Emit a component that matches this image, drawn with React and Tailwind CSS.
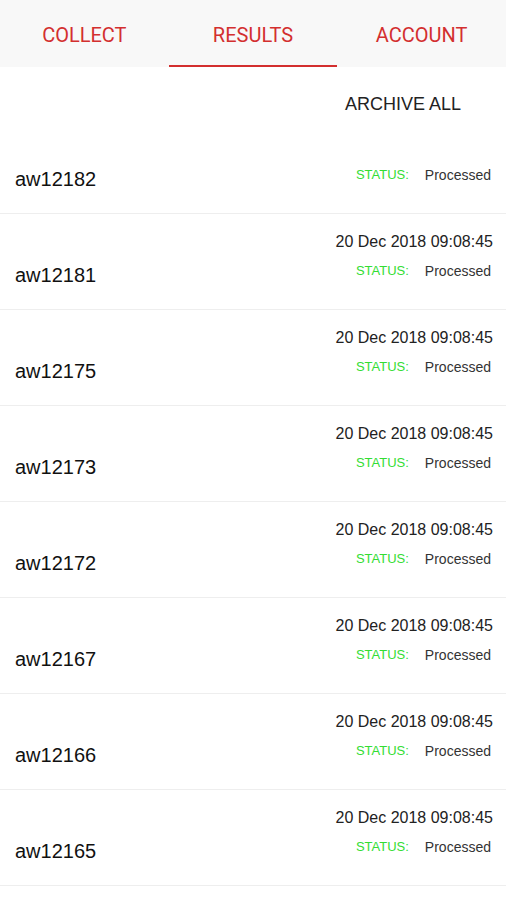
import React from "react";

const rows = [
  { id: "aw12182", date: "" },
  { id: "aw12181", date: "20 Dec 2018 09:08:45" },
  { id: "aw12175", date: "20 Dec 2018 09:08:45" },
  { id: "aw12173", date: "20 Dec 2018 09:08:45" },
  { id: "aw12172", date: "20 Dec 2018 09:08:45" },
  { id: "aw12167", date: "20 Dec 2018 09:08:45" },
  { id: "aw12166", date: "20 Dec 2018 09:08:45" },
  { id: "aw12165", date: "20 Dec 2018 09:08:45" },
];

const arial = { fontFamily: "'Liberation Sans', Arial, sans-serif" };

export default function App() {
  return (
    <div className="w-[506px] h-[900px] bg-white overflow-hidden" style={arial}>
      <div className="flex h-[67px] bg-[#f8f8f8]" style={{ fontFamily: "Roboto, 'Liberation Sans', sans-serif" }}>
        {["COLLECT", "RESULTS", "ACCOUNT"].map((t, i) => (
          <div key={t} className="flex-1 flex flex-col">
            <div className="flex-1 flex items-center justify-center text-[20px] text-[#d32f2f] pt-[5px]">{t}</div>
            <div className={i === 1 ? "h-[2px] bg-[#d32f2f]" : "h-[2px]"} />
          </div>
        ))}
      </div>
      <div className="flex justify-end pr-[45px] pt-[26px] h-[51px]">
        <div className="text-[18px] leading-[22px] text-[#222]">ARCHIVE ALL</div>
      </div>
      <div className="flex flex-col">
        {rows.map((r) => (
          <div key={r.id} className="flex justify-between h-[96px] border-b border-[#eeeeee] pl-[15px] pr-[13px]">
            <div className="pt-[49px] text-[20px] leading-[24px] text-[#111]">{r.id}</div>
            <div className="flex flex-col items-end pt-[18px]">
              <div className="text-[16px] leading-[20px] text-[#222] h-[20px]">{r.date}</div>
              <div className="flex items-center mt-[10px] h-[18px] pr-[2px]">
                <span className="text-[13px] text-[#33dd33]">STATUS:</span>
                <span className="text-[14px] text-[#333] ml-[16px]">Processed</span>
              </div>
            </div>
          </div>
        ))}
      </div>
    </div>
  );
}
